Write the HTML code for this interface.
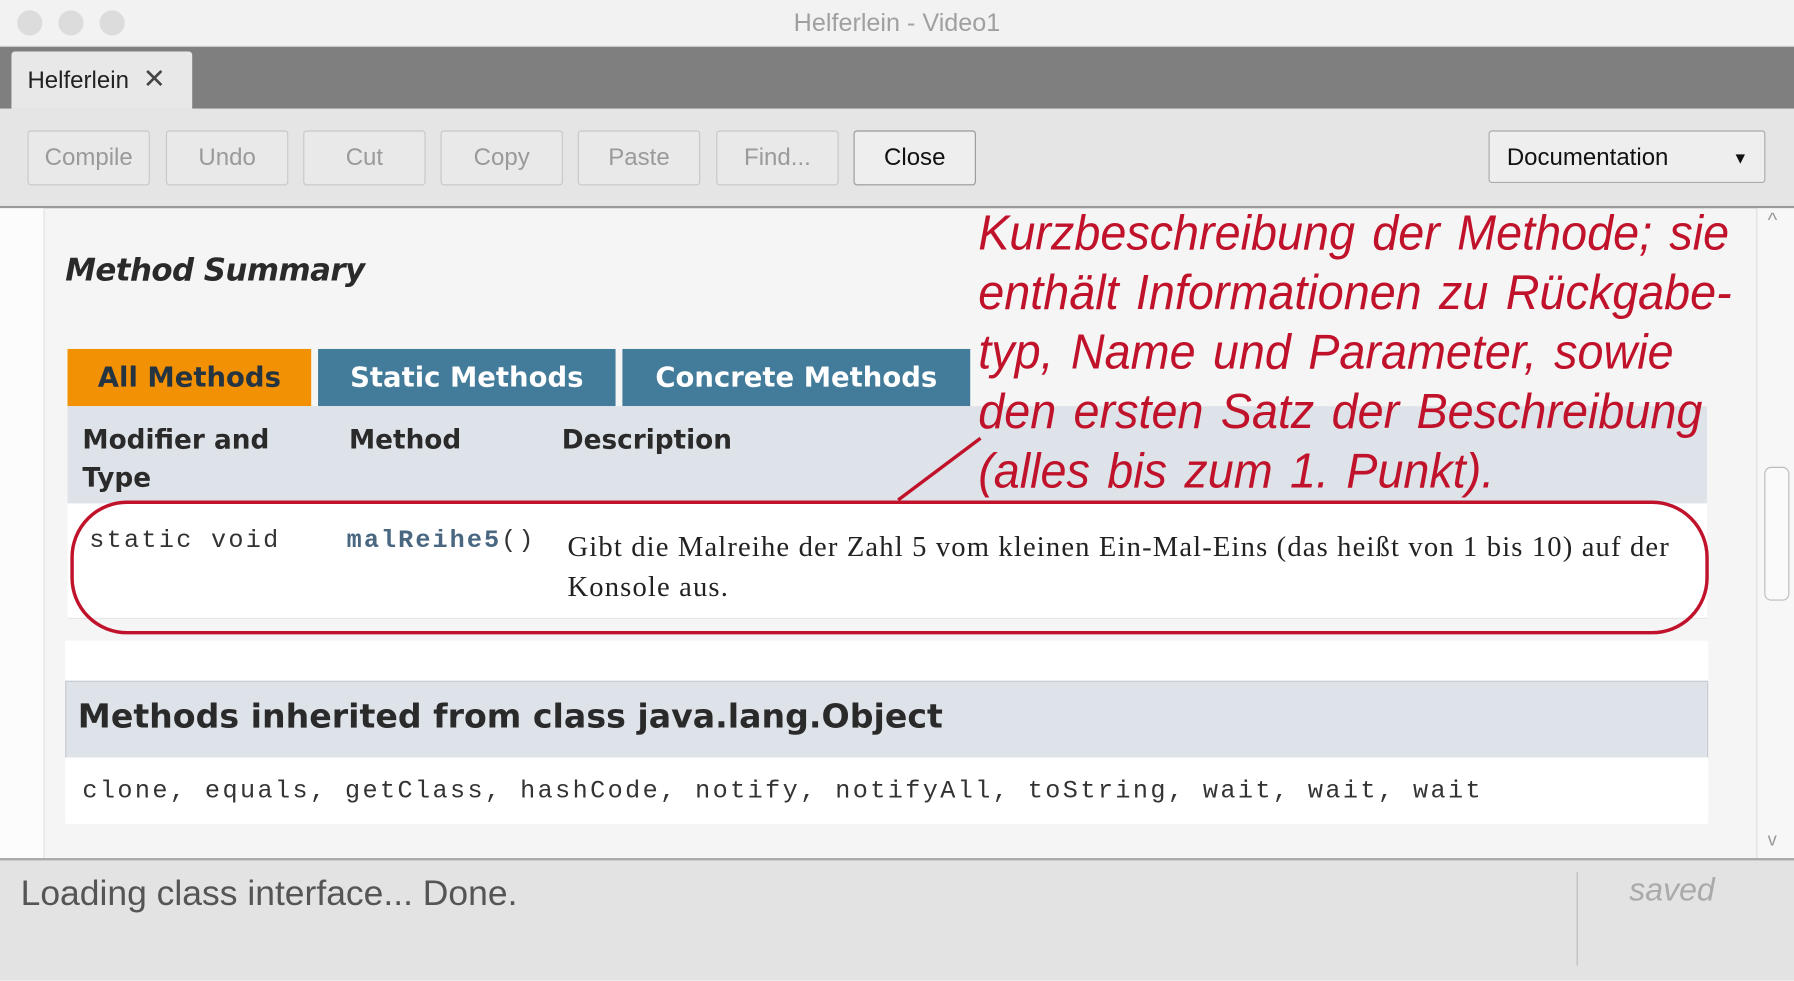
<!DOCTYPE html>
<html><head><meta charset="utf-8"><style>
html,body{margin:0;padding:0;width:1794px;height:978px;overflow:hidden;background:#f5f5f5}
#s{position:absolute;left:0;top:0;width:1568px;height:855px;transform:scale(1.14413);transform-origin:0 0;font-family:"Liberation Sans",sans-serif}
.a{position:absolute}
.btn{position:absolute;top:114px;height:46px;width:105px;border:1px solid #c8c8c8;border-radius:3px;background:#e9e9e9;color:#9a9a9a;font-size:21px;text-align:center;line-height:46px}
.hw{font-family:"Liberation Sans",sans-serif;font-style:italic;color:#c0132b;font-size:43px;white-space:nowrap;transform:scaleX(0.95);transform-origin:0 0;word-spacing:4px}
</style></head><body><div id="s">
<div class="a" style="left:0;top:0;width:1568px;height:40px;background:#f2f2f2;border-bottom:1px solid #cfcfcf"></div>
<div class="a" style="left:15px;top:9px;width:22px;height:22px;border-radius:50%;background:#dcdcdc"></div>
<div class="a" style="left:51px;top:9px;width:22px;height:22px;border-radius:50%;background:#dcdcdc"></div>
<div class="a" style="left:87px;top:9px;width:22px;height:22px;border-radius:50%;background:#dcdcdc"></div>
<div class="a" style="left:0;top:7px;width:1568px;text-align:center;color:#a0a0a0;font-size:22px">Helferlein - Video1</div>
<div class="a" style="left:0;top:41px;width:1568px;height:54px;background:#7f7f80"></div>
<div class="a" style="left:10px;top:45px;width:158px;height:50px;background:#e8e8e8;border-radius:3px 3px 0 0;font-size:21px;line-height:50px;color:#222"><span style="margin-left:14px">Helferlein</span><span style="margin-left:12px;font-size:24px;color:#444">✕</span></div>
<div class="a" style="left:0;top:95px;width:1568px;height:85px;background:#e5e5e5;border-bottom:2px solid #9a9a9a"></div>
<div class="btn" style="left:24px">Compile</div>
<div class="btn" style="left:145px">Undo</div>
<div class="btn" style="left:265px">Cut</div>
<div class="btn" style="left:385px">Copy</div>
<div class="btn" style="left:505px">Paste</div>
<div class="btn" style="left:626px">Find...</div>
<div class="btn" style="left:746px;color:#111;border-color:#999;background:#eee">Close</div>
<div class="btn" style="left:1301px;width:242px;color:#111;border-color:#aaa;background:#eee;text-align:left;padding-left:15px;box-sizing:border-box">Documentation<span style="position:absolute;right:14px;top:0;font-size:14px">▼</span></div>
<div class="a" style="left:0;top:182px;width:38px;height:568px;background:#fcfcfc;border-right:1px solid #e0e0e0"></div>
<div class="a" style="left:1535px;top:182px;width:33px;height:568px;background:#f7f7f7;border-left:1px solid #ddd"></div>
<div class="a" style="left:1542px;top:408px;width:20px;height:115px;border:1px solid #bbb;border-radius:6px;background:#fafafa"></div>
<div class="a" style="left:1545px;top:182px;color:#999;font-size:18px">^</div>
<div class="a" style="left:1545px;top:726px;color:#999;font-size:16px">v</div>
<div class="a" style="left:57px;top:221px;font-size:27px;font-weight:bold;font-style:italic;color:#2a2a2a;font-family:'DejaVu Sans',sans-serif;letter-spacing:-0.5px">Method Summary</div>
<div class="a" style="left:59px;top:305px;width:213px;height:50px;background:#f29104;color:#253441;font-weight:bold;font-size:24px;text-align:center;line-height:50px;font-family:'DejaVu Sans',sans-serif">All Methods</div>
<div class="a" style="left:278px;top:305px;width:260px;height:50px;background:#437b9a;color:#fff;font-weight:bold;font-size:24px;text-align:center;line-height:50px;font-family:'DejaVu Sans',sans-serif">Static Methods</div>
<div class="a" style="left:544px;top:305px;width:304px;height:50px;background:#437b9a;color:#fff;font-weight:bold;font-size:24px;text-align:center;line-height:50px;font-family:'DejaVu Sans',sans-serif">Concrete Methods</div>
<div class="a" style="left:59px;top:355px;width:1433px;height:85px;background:#dee3e9"></div>
<div class="a" style="left:72px;top:369px;font-weight:bold;font-size:23px;line-height:33px;color:#2a2a2a;font-family:'DejaVu Sans',sans-serif">Modifier and<br>Type</div>
<div class="a" style="left:305px;top:369px;font-weight:bold;font-size:23px;line-height:33px;color:#2a2a2a;font-family:'DejaVu Sans',sans-serif">Method</div>
<div class="a" style="left:491px;top:369px;font-weight:bold;font-size:23px;line-height:33px;color:#2a2a2a;font-family:'DejaVu Sans',sans-serif">Description</div>
<div class="a" style="left:59px;top:440px;width:1433px;height:100px;background:#fff;border-bottom:1px solid #e6e6e6"></div>
<div class="a" style="left:78px;top:460px;font-family:'Liberation Mono',monospace;font-size:22px;color:#333;letter-spacing:2px">static void</div>
<div class="a" style="left:303px;top:460px;font-family:'Liberation Mono',monospace;font-size:22px;color:#4a6782;letter-spacing:1.8px"><b>malReihe5</b><span style="color:#333">()</span></div>
<div class="a" style="left:496px;top:461px;font-family:'Liberation Serif',serif;font-size:25px;line-height:35px;color:#222;letter-spacing:1px">Gibt die Malreihe der Zahl 5 vom kleinen Ein-Mal-Eins (das heißt von 1 bis 10) auf der<br>Konsole aus.</div>
<div class="a" style="left:57px;top:560px;width:1436px;height:35px;background:#fff"></div>
<div class="a" style="left:57px;top:595px;width:1434px;height:66px;background:#dee3e9;border:1px solid #c8ccd2"></div>
<div class="a" style="left:68px;top:609px;font-weight:bold;font-size:29px;color:#2a2a2a;font-family:'DejaVu Sans',sans-serif">Methods inherited from class java.lang.Object</div>
<div class="a" style="left:57px;top:662px;width:1436px;height:58px;background:#fff"></div>
<div class="a" style="left:72px;top:679px;font-family:'Liberation Mono',monospace;font-size:22px;color:#333;white-space:pre;letter-spacing:2.1px">clone, equals, getClass, hashCode, notify, notifyAll, toString, wait, wait, wait</div>
<div class="a hw" style="left:855px;top:178px;line-height:52px">Kurzbeschreibung der Methode; sie<br>enthält Informationen zu Rückgabe-<br>typ, Name und Parameter, sowie<br>den ersten Satz der Beschreibung<br>(alles bis zum 1. Punkt).</div>
<svg class="a" style="left:0;top:0" width="1568" height="855"><rect x="63" y="439" width="1429" height="114" rx="48" fill="none" stroke="#c0132b" stroke-width="3"/><line x1="785" y1="437" x2="857" y2="383" stroke="#c0132b" stroke-width="3"/></svg>
<div class="a" style="left:0;top:750px;width:1568px;height:105px;background:#e3e3e3;border-top:2px solid #a8a8a8"></div>
<div class="a" style="left:1378px;top:762px;width:1px;height:82px;background:#bbb"></div>
<div class="a" style="left:18px;top:763px;font-size:31px;color:#555">Loading class interface... Done.</div>
<div class="a" style="left:1424px;top:762px;font-size:28px;color:#aaa;font-style:italic">saved</div>
</div></body></html>
